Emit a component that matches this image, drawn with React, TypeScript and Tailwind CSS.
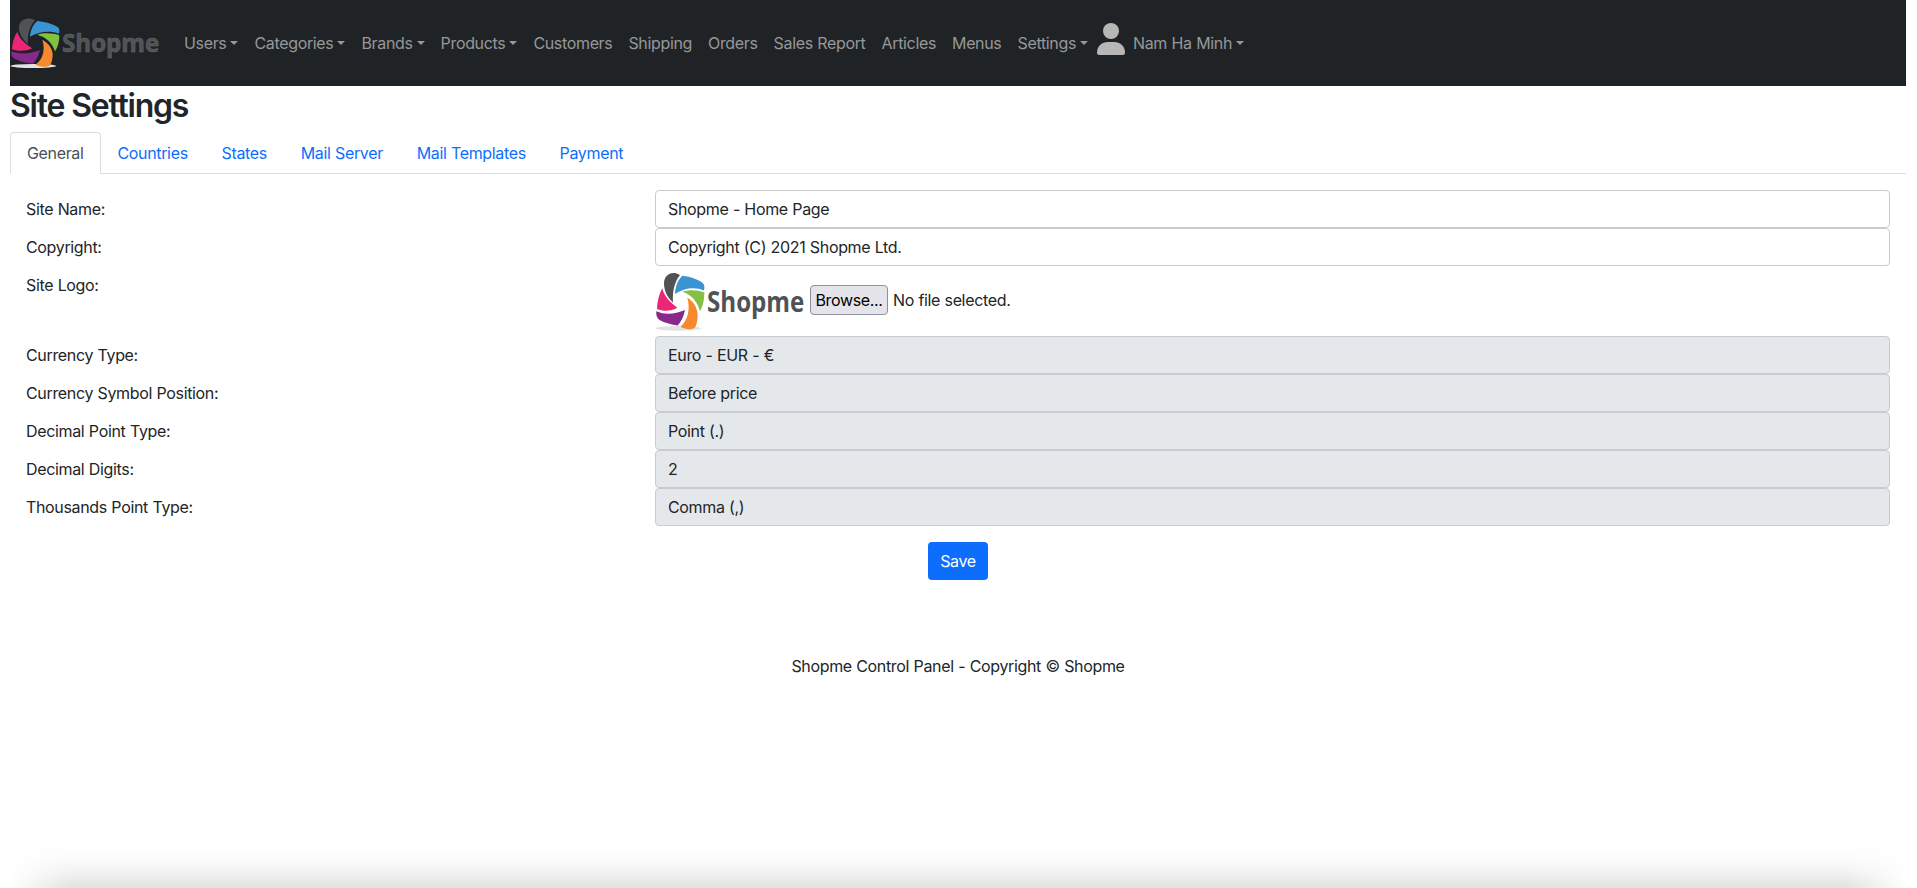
import React from "react";

function Logo({ className, outline }: { className: string; outline?: string }) {
  return (
    <svg viewBox="30 50 450 162" preserveAspectRatio="none" className={`overflow-visible tracking-normal ${className}`}>
      <ellipse cx="100" cy="200" rx="68" ry="6" fill="#e2e2e2" />
      <path d="M57 86C56 62 82 50 105 63C88 82 82 104 84 134C70 122 58 108 57 86Z" fill="#505355" />
      <path d="M112 65C138 68 160 74 174 84C179 88 179 95 177 103C150 93 118 96 90 112C91 92 99 76 112 65Z" fill="#3a94d1" />
      <path d="M178 108C178 126 174 144 165 156C156 130 140 114 112 106C132 100 158 101 178 108Z" fill="#84c044" />
      <path d="M127 121C146 132 156 146 158 164C158 178 155 192 150 198C138 206 120 202 107 196C130 178 136 150 127 121Z" fill="#f6892d" />
      <path d="M34 156C60 166 90 164 120 153C116 170 108 184 98 193C76 190 52 184 40 176C34 170 33 162 34 156Z" fill="#86298a" />
      <path d="M52 97C56 116 74 132 97 147C80 156 56 157 36 150C37 130 43 110 52 97Z" fill="#ed2576" />
      <text
        x="186"
        y="158"
        fontSize="75"
        fontWeight="700"
        fill="#505355"
        stroke={outline}
        strokeWidth={outline ? 1.5 : 0}
        textLength="292"
        lengthAdjust="spacingAndGlyphs"
        className="font-['Open_Sans',sans-serif]"
      >
        Shopme
      </text>
    </svg>
  );
}

function Caret() {
  return <span className="ml-[4px] inline-block border-x-[4.8px] border-t-[4.8px] border-x-transparent border-t-current align-[4px]" />;
}

const navItems = [
  { label: "Users", menu: true },
  { label: "Categories", menu: true },
  { label: "Brands", menu: true },
  { label: "Products", menu: true },
  { label: "Customers" },
  { label: "Shipping" },
  { label: "Orders" },
  { label: "Sales Report" },
  { label: "Articles" },
  { label: "Menus" },
  { label: "Settings", menu: true },
];

const tabs = ["Countries", "States", "Mail Server", "Mail Templates", "Payment"];

const selects = [
  ["Currency Type:", "Euro - EUR - €"],
  ["Currency Symbol Position:", "Before price"],
  ["Decimal Point Type:", "Point (.)"],
  ["Decimal Digits:", "2"],
  ["Thousands Point Type:", "Comma (,)"],
];

function Row({ label, children }: { label: string; children: React.ReactNode }) {
  return (
    <div className="flex">
      <div className="w-[629px] shrink-0 pt-[7px]">{label}</div>
      <div className="flex-1">{children}</div>
    </div>
  );
}

function Field({ value, muted }: { value: string; muted?: boolean }) {
  return (
    <div className={`h-[38px] rounded-[4px] border border-[#c6ccd2] px-[12px] py-[6px] ${muted ? "bg-[#e4e8eb]" : "bg-white"}`}>
      {value}
    </div>
  );
}

export default function App() {
  return (
    <div className="flex h-[888px] flex-col overflow-hidden bg-white font-['Inter',sans-serif] text-[16px] leading-[24px] tracking-[-0.34px] text-[#212529] [word-spacing:0.3px]">
      <div className="ml-[10px] w-[1896px]">
        <nav className="flex h-[86px] items-center bg-[#1f2326] text-[#969899]">
          <Logo className="h-[54px] w-[150px]" outline="#68696a" />
          <div className="ml-[16px] flex w-[921px]">
            {navItems.map((item) => (
              <a key={item.label} className="px-[8px] whitespace-nowrap">
                {item.label}
                {item.menu && <Caret />}
              </a>
            ))}
          </div>
          <svg viewBox="0 0 28 32" className="-mt-[8px] h-[32px] w-[28px] fill-[#b7b7b7]">
            <circle cx="14" cy="8" r="8" />
            <path d="M0 29.5C0 23 5.5 19 10.5 19h7C22.500 19 28 23 28 29.500A2.500 2.500 0 0 1 25.500 32h-23A2.500 2.500 0 0 1 0 29.500Z" />
          </svg>
          <a className="px-[8px] whitespace-nowrap">
            Nam Ha Minh
            <Caret />
          </a>
        </nav>
        <h2 className="mb-[7px] pt-px text-[32px] leading-[38px] font-semibold tracking-[-1.25px]">Site Settings</h2>
        <div className="flex h-[42px] border-b border-[#dadde0] text-[#0d6efd]">
          <a className="h-[42px] rounded-t-[4px] border border-b-white border-[#dadde0] bg-white px-[16px] py-[8px] text-[#495057]">General</a>
          {tabs.map((tab) => (
            <a key={tab} className="px-[16.9px] py-[9px]">{tab}</a>
          ))}
        </div>
        <div className="p-[16px]">
          <Row label="Site Name:"><Field value="Shopme - Home Page" /></Row>
          <Row label="Copyright:"><Field value="Copyright (C) 2021 Shopme Ltd." /></Row>
          <Row label="Site Logo:">
            <div className="flex h-[70px] items-start">
              <Logo className="mt-[4px] h-[63px] w-[150px]" />
              <button className="mt-[19px] ml-[5px] h-[30px] w-[78px] rounded-[4px] border border-[#8f8f9d] bg-[#e5e4ea] whitespace-nowrap text-black">Browse...</button>
              <span className="mt-[22px] ml-[5px]">No file selected.</span>
            </div>
          </Row>
          {selects.map(([label, value]) => (
            <Row key={label} label={label}><Field value={value} muted /></Row>
          ))}
          <div className="mt-[16px] flex justify-center">
            <button className="h-[38px] w-[60px] rounded-[4px] bg-[#0d6efd] text-white">Save</button>
          </div>
        </div>
        <div className="mt-[58px] text-center">Shopme Control Panel - Copyright © Shopme</div>
      </div>
      <div className="mt-auto h-[44px] w-full shrink-0 bg-[linear-gradient(to_right,#fff_0px,#fff_10px,transparent_70px,transparent_1847px,#fff_1907px,#fff_100%),linear-gradient(to_bottom,#fff_0%,#fbfbfb_35%,#f2f2f2_65%,#e2e2e2_100%)]" />
    </div>
  );
}
